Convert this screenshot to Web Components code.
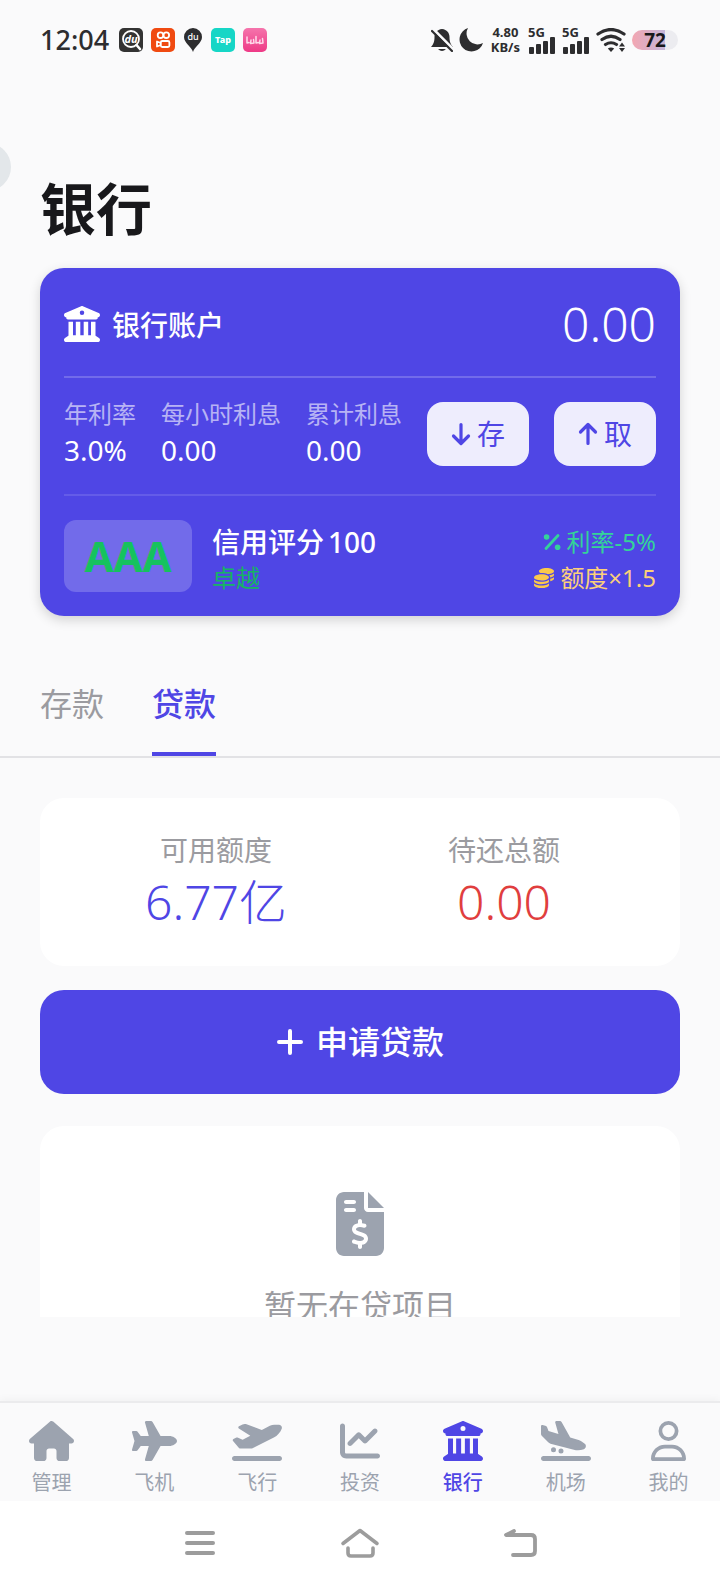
<!DOCTYPE html>
<html lang="zh-CN">
<head>
<meta charset="UTF-8">
<meta name="viewport" content="width=device-width, initial-scale=1.0">
<title>银行</title>
<style>
  html, body {
    margin: 0;
    height: 100%;
  }
  body {
    background: #fafafb;
    color: #18181b;
    font-family: "Noto Sans", "Noto Sans CJK SC", sans-serif;
    --brand: #4f46e5;
    --muted: #9ca3af;
    --gutter: 40px;
  }
</style>
</head>
<body>
<bank-app></bank-app>

<script>
const ICONS = {
  bank: ['0 0 512 512', '<path d="M243.4 2.6l-224 96c-14 6-21.8 21-18.7 35.8S16.8 160 32 160v8c0 13.3 10.7 24 24 24H456c13.3 0 24-10.7 24-24v-8c15.2 0 28.3-10.7 31.3-25.6s-4.8-29.9-18.7-35.8l-224-96c-8-3.4-17.2-3.4-25.2 0zM128 224H64V420.3c-.6 .3-1.2 .7-1.8 1.1l-48 32c-11.7 7.8-17 22.4-12.9 35.9S17.9 512 32 512H480c14.1 0 26.5-9.2 30.6-22.7s-1.1-28.1-12.9-35.9l-48-32c-.6-.4-1.2-.7-1.8-1.1V224H384V416H344V224H280V416H232V224H168V416H128V224zM256 64a32 32 0 1 1 0 64 32 32 0 1 1 0-64z"/>'],
  house: ['0 0 576 512', '<path d="M575.8 255.5c0 18-15 32.1-32 32.1h-32l.7 160.2c0 2.7-.2 5.4-.5 8.1V472c0 22.1-17.9 40-40 40H456c-1.1 0-2.2 0-3.3-.1c-1.4 .1-2.8 .1-4.2 .1H416 392c-22.1 0-40-17.9-40-40V448 384c0-17.7-14.3-32-32-32H256c-17.7 0-32 14.3-32 32v64 24c0 22.1-17.9 40-40 40H160 128.1c-1.5 0-3-.1-4.5-.2c-1.2 .1-2.4 .2-3.6 .2H104c-22.1 0-40-17.9-40-40V360c0-.9 0-1.9 .1-2.8V287.6H32c-18 0-32-14-32-32.1c0-9 3-17 10-24L266.4 8c7-7 15-8 22-8s15 2 21 7L564.8 231.5c8 7 12 15 11 24z"/>'],
  plane: ['0 0 576 512', '<path d="M482.3 192c34.2 0 93.7 29 93.7 64c0 36-59.5 64-93.7 64l-116.6 0L265.2 495.9c-5.7 10-16.3 16.1-27.8 16.1l-56.2 0c-10.6 0-18.3-10.2-15.4-20.4l49-171.6L112 320 68.8 377.6c-3 4-7.8 6.4-12.8 6.4l-42 0c-7.8 0-14-6.3-14-14c0-1.3 .2-2.6 .5-3.9L32 256 .5 145.9c-.4-1.3-.5-2.6-.5-3.9c0-7.8 6.3-14 14-14l42 0c5 0 9.8 2.4 12.8 6.4L112 192l102.9 0-49-171.6C162.9 10.2 170.6 0 181.2 0l56.2 0c11.5 0 22.1 6.2 27.8 16.1L365.7 192l116.6 0z"/>'],
  depart: ['0 0 640 512', '<path d="M381 114.9L186.1 41.8c-16.7-6.2-35.2-5.3-51.1 2.7L89.1 67.4C78 73 77.2 88.5 87.6 95.2l146.9 94.5L136 240 77.8 214.1c-8.7-3.9-18.8-3.7-27.3 .6L18.3 230.8c-9.3 4.7-11.8 16.8-5 24.7l73.1 85.3c6.1 7.1 15 11.2 24.3 11.2H248.4c5 0 9.9-1.2 14.3-3.4L535.6 212.2c46.5-23.3 82.5-63.3 100.8-112C645.9 75 627.2 48 600.2 48H542.8c-20.2 0-40.2 4.8-58.2 14L381 114.9zM0 480c0 17.7 14.3 32 32 32H608c17.7 0 32-14.3 32-32s-14.3-32-32-32H32c-17.7 0-32 14.3-32 32z"/>'],
  arrive: ['0 0 640 512', '<path d="M.3 166.9L0 68C0 57.7 9.5 50.1 19.5 52.3l35.6 7.9c10.6 2.3 19.2 9.9 23 20L96 128l127.3 37.6L181.8 20.4C178.9 10.2 186.6 0 197.2 0h40.1c11.6 0 22.2 6.2 27.9 16.3l109 193.8 107.2 31.7c15.9 4.7 30.8 12.5 43.7 22.8l34.4 27.6c24 19.2 18.1 57.3-10.7 68.2c-41.2 15.6-86.2 18.1-128.8 7L121.7 289.8c-11.1-2.9-21.2-8.7-29.3-16.9L9.5 189.4c-5.9-6-9.3-14.1-9.3-22.5zM32 448H608c17.7 0 32 14.3 32 32s-14.3 32-32 32H32c-17.7 0-32-14.3-32-32s14.3-32 32-32zm96-80a32 32 0 1 1 64 0 32 32 0 1 1 -64 0zm128-16a32 32 0 1 1 0 64 32 32 0 1 1 0-64z"/>'],
  chart: ['0 0 512 512', '<path d="M64 64c0-17.7-14.3-32-32-32S0 46.3 0 64V400c0 44.2 35.8 80 80 80H480c17.7 0 32-14.3 32-32s-14.3-32-32-32H80c-8.8 0-16-7.2-16-16V64zm406.6 86.6c12.5-12.5 12.5-32.8 0-45.3s-32.8-12.5-45.3 0L320 210.7l-57.4-57.4c-12.5-12.5-32.8-12.5-45.3 0l-112 112c-12.5 12.5-12.5 32.8 0 45.3s32.8 12.5 45.3 0L240 221.3l57.4 57.4c12.5 12.5 32.8 12.5 45.3 0l128-128z"/>'],
  user: ['0 0 448 512', '<path d="M304 128a80 80 0 1 0 -160 0 80 80 0 1 0 160 0zM96 128a128 128 0 1 1 256 0A128 128 0 1 1 96 128zM49.3 464H398.7c-8.9-63.3-63.3-112-129-112H178.3c-65.7 0-120.1 48.7-129 112zM0 482.3C0 383.8 79.8 304 178.3 304h91.4C368.2 304 448 383.8 448 482.3c0 16.4-13.3 29.7-29.7 29.7H29.7C13.3 512 0 498.7 0 482.3z"/>'],
  invoice: ['0 0 384 512', '<path d="M64 0C28.7 0 0 28.7 0 64V448c0 35.3 28.7 64 64 64H320c35.3 0 64-28.7 64-64V160H256c-17.7 0-32-14.3-32-32V0H64zM256 0V128H384L256 0zM64 80c0-8.8 7.2-16 16-16h64c8.8 0 16 7.2 16 16s-7.2 16-16 16H80c-8.8 0-16-7.2-16-16zm0 64c0-8.8 7.2-16 16-16h64c8.8 0 16 7.2 16 16s-7.2 16-16 16H80c-8.8 0-16-7.2-16-16zm128 72c8.8 0 16 7.2 16 16v17.3c8.5 1.2 16.7 3.1 24.1 5.1c8.5 2.3 13.6 11 11.3 19.6s-11 13.6-19.6 11.3c-11.1-3-22-5.2-32.1-5.3c-8.4-.1-17.4 1.8-23.6 5.5c-5.7 3.4-8.1 7.3-8.1 12.8c0 3.7 1.3 6.5 7.3 10.1c6.9 4.1 16.6 7.1 29.2 10.9l.5 .1c11.3 3.4 25.3 7.6 36.3 14.6c12.1 7.6 22.4 19.7 22.7 38.2c.3 19.3-9.6 33.3-22.9 41.6c-7.7 4.8-16.4 7.6-25.1 9.1V440c0 8.8-7.2 16-16 16s-16-7.2-16-16V422.2c-11.2-2.1-21.7-5.7-30.9-8.9c-2.1-.7-4.2-1.4-6.2-2.1c-8.4-2.8-12.9-11.9-10.1-20.2s11.9-12.9 20.2-10.1c2.5 .8 4.8 1.6 7.1 2.4c13.6 4.6 24.6 8.4 36.3 8.7c9.1 .3 17.9-1.7 23.7-5.3c5.1-3.2 7.9-7.3 7.8-14c-.1-4.6-1.8-7.8-7.7-11.6c-6.8-4.3-16.5-7.4-29-11.2l-1.6-.5c-11-3.3-24.3-7.3-34.8-13.7c-12-7.2-22.6-18.9-22.7-37.3c-.1-19.4 10.8-32.8 23.8-40.5c7.5-4.4 15.8-7.2 24.1-8.7V232c0-8.8 7.2-16 16-16z"/>'],
  coins: ['0 0 512 512', '<path d="M512 80c0 18-14.3 34.6-38.4 48c-29.1 16.1-72.5 27.5-122.3 30.9c-3.7-1.8-7.4-3.5-11.3-5C300.6 137.4 248.2 128 192 128c-8.3 0-16.4 .2-24.5 .6l-1.1-.6C142.3 114.6 128 98 128 80c0-44.2 86-80 192-80S512 35.8 512 80zM160.7 161.1c10.2-.7 20.7-1.1 31.3-1.1c62.2 0 117.4 12.3 152.5 31.4C369.3 204.9 384 221.7 384 240c0 4-.7 7.9-2.1 11.7c-4.6 13.2-17 25.3-35 35.5c-.4 .2-.9 .5-1.3 .7c-35 19.4-90.8 32-153.6 32c-59.6 0-112.9-11.3-148.2-29.1c-1.9-.9-3.7-1.9-5.5-2.9C14.3 274.6 0 258 0 240c0-34.8 53.4-64.5 128-75.4c10.5-1.5 21.4-2.7 32.7-3.5zM416 240c0-21.9-10.6-39.9-24.1-53.4c28.3-4.4 54.2-11.4 76.2-20.5c16.3-6.8 31.5-15.2 43.9-25.5V176c0 19.3-16.5 37.1-43.8 50.9c-14.6 7.4-32.4 13.7-52.4 18.5c.1-1.8 .2-3.5 .2-5.3zm-32 96c0 18-14.3 34.6-38.4 48c-1.8 1-3.6 1.9-5.5 2.9C304.9 404.7 251.6 416 192 416c-62.8 0-118.6-12.6-153.6-32C14.3 370.6 0 354 0 336V300.6c12.5 10.3 27.6 18.7 43.9 25.5C83.4 342.6 135.8 352 192 352s108.6-9.4 148.1-25.9c7.8-3.2 15.3-6.9 22.4-10.9c6.1-3.4 11.8-7.2 17.2-11.2c1.5-1.1 2.9-2.3 4.3-3.4V336zm32 0V278.1c19-4.2 36.5-9.5 52.1-16c16.3-6.8 31.5-15.2 43.9-25.5V272c0 10.5-5 21-14.9 30.9c-16.3 16.3-45 29.7-81.3 38.4c.1-1.7 .2-3.5 .2-5.3zM192 448c56.2 0 108.6-9.4 148.1-25.9c16.3-6.8 31.5-15.2 43.9-25.5V432c0 44.2-86 80-192 80S0 476.2 0 432V396.6c12.5 10.3 27.6 18.7 43.9 25.5C83.4 438.6 135.8 448 192 448z"/>'],
  percent: ['0 0 18 18', '<path d="M3 15.5L15 2.5" fill="none" stroke="currentColor" stroke-width="2.8" stroke-linecap="round"/><circle cx="3.6" cy="4" r="2.8"/><circle cx="14.6" cy="14.2" r="2.8"/>'],
  down: ['0 0 20 24', '<path d="M10 2.5V21M2.5 14L10 21.5L17.5 14" fill="none" stroke="currentColor" stroke-width="3.2" stroke-linecap="round" stroke-linejoin="round"/>'],
  up: ['0 0 20 24', '<path d="M10 21.5V3M2.5 10L10 2.5L17.5 10" fill="none" stroke="currentColor" stroke-width="3.2" stroke-linecap="round" stroke-linejoin="round"/>'],
  plus: ['0 0 28 28', '<path d="M14 3V25M3 14H25" fill="none" stroke="currentColor" stroke-width="4" stroke-linecap="round"/>'],
  menu: ['0 0 40 32', '<path d="M7 6H33M7 16H33M7 26H33" fill="none" stroke="currentColor" stroke-width="4" stroke-linecap="round"/>'],
  home: ['0 0 40 32', '<path d="M3 16.5L20 3.5L37 16.5M8 21V26Q8 29 11 29H30Q33 29 33 26V21" fill="none" stroke="currentColor" stroke-width="3.6" stroke-linecap="round" stroke-linejoin="round"/>'],
  back: ['0 0 40 32', '<path d="M14 4L6 8H31Q35 8 35 12V24Q35 28 31 28H13" fill="none" stroke="currentColor" stroke-width="3.8" stroke-linecap="round" stroke-linejoin="round"/>'],
  duSearch: ['0 0 24 24', '<rect width="24" height="24" rx="5" fill="#333"/><circle cx="12" cy="11" r="8" fill="none" stroke="#fff" stroke-width="1.8"/><path d="M17.5 17L21 21" stroke="#fff" stroke-width="2.6" stroke-linecap="round"/><text x="12" y="15" text-anchor="middle" font-size="11" font-weight="700" font-style="italic" fill="#fff">du</text>'],
  kuai: ['0 0 24 24', '<rect width="24" height="24" rx="5" fill="#f04a11"/><g fill="none" stroke="#fff" stroke-width="1.8"><circle cx="9.5" cy="7.2" r="2.8"/><circle cx="15.3" cy="7.2" r="2.8"/><rect x="9.8" y="13" width="8.6" height="6" rx="1.5"/><path d="M9.8 15L6 13.5V18.5L9.8 17" stroke-linejoin="round"/></g>'],
  duPin: ['0 0 20 24', '<path d="M10 24C8.5 18.5 1 15 1 9A9 9 0 0 1 19 9C19 15 11.5 18.5 10 24z" fill="#2d2d2f"/><text x="10" y="12" text-anchor="middle" font-size="9" font-weight="500" fill="#fff">du</text>'],
  tap: ['0 0 24 24', '<rect width="24" height="24" rx="5" fill="#16d6c6"/><text x="12" y="15" text-anchor="middle" font-size="9" font-weight="800" fill="#fff">Tap</text>'],
  lala: ['0 0 24 24', '<defs><linearGradient id="g" x2="0" y2="1"><stop stop-color="#f574ac"/><stop offset="1" stop-color="#ee3a86"/></linearGradient></defs><rect width="24" height="24" rx="5" fill="url(#g)"/><path d="M4 9V15L6 14.5M8 12L7.5 15.5L11 15L10.5 11.5M13 8.5V15L15.5 14.5M17 12L16.5 15.5L20 15L19.5 10.5" fill="none" stroke="#ffd9ea" stroke-width="1.5" stroke-linecap="round" stroke-linejoin="round"/>'],
  bell: ['0 0 22 24', '<path d="M11 1C6 1.5 3.5 5 3.5 9C3.5 14 2.5 16 0 19H22C19.5 16 18.5 14 18.5 9C18.5 5 16 1.5 11 1z"/><path d="M7 21H15Q11 25 7 21z"/><path d="M1 0L23 22" stroke="#fafafb" stroke-width="3"/><path d="M1 3L21 23" stroke="currentColor" stroke-width="2.2" stroke-linecap="round"/>'],
  moon: ['0 0 24 24', '<path d="M9 0A12 12 0 1 0 24 15A11 11 0 0 1 9 0z"/>'],
  signal: ['0 0 28 17', '<rect x="1" y="10" width="5" height="7" rx="1"/><rect x="8" y="7" width="5" height="10" rx="1"/><rect x="15" y="4" width="5" height="13" rx="1"/><rect x="22" y="0" width="5" height="17" rx="1"/>'],
  wifi: ['0 0 30 24', '<path d="M2 6Q15 -3 28 6M6 11.5Q15 5 24 11.5M9.5 16.5Q15 13 20.5 16.5" fill="none" stroke="currentColor" stroke-width="3.2" stroke-linecap="round"/><path d="M15 24L11.8 20.5Q15 18.5 18.2 20.5z"/><path d="M26 14.5L29 18.5H23zM26 24L23 20H29z"/>'],
};

class AppIcon extends HTMLElement {
  connectedCallback() {
    const [box, body] = ICONS[this.getAttribute('name')];
    this.attachShadow({ mode: 'open' });
    this.shadowRoot.innerHTML = `
      <style>
        :host { display: inline-flex; flex: none; height: 24px; }
        svg { display: block; height: 100%; fill: currentColor; }
      </style>
      <svg viewBox="${box}" aria-hidden="true">${body}</svg>
    `;
  }
}
customElements.define('app-icon', AppIcon);

class PhoneStatusBar extends HTMLElement {
  connectedCallback() {
    this.attachShadow({ mode: 'open' });
    this.shadowRoot.innerHTML = `
      <style>
        :host {
          display: flex;
          justify-content: space-between;
          align-items: center;
          height: 80px;
          padding: 0 var(--gutter);
          color: #2d2d2f;
        }
        .group { display: flex; align-items: center; gap: 8px; }
        .system { gap: 6px; padding-right: 2px; }
        time { font-size: 27px; line-height: 32px; font-weight: 500; margin-right: 2px; }
        .speed {
          font-size: 13px;
          line-height: 15px;
          font-weight: 700;
          text-align: center;
          margin: 0 2px;
        }
        .speed div { height: 15px; }
        .cell { display: flex; flex-direction: column; font-size: 13px; line-height: 10px; font-weight: 700; }
        .cell app-icon { height: 17px; }
        .battery {
          width: 46px;
          line-height: 20px;
          border-radius: 10px;
          background: linear-gradient(90deg, #f3a6b1, #c3b6da 72%, #ececf0 72%);
          font-size: 19px;
          font-weight: 700;
          text-align: center;
          color: #18181b;
        }
      </style>
      <div class="group">
        <time>12:04</time>
        <app-icon name="duSearch"></app-icon>
        <app-icon name="kuai"></app-icon>
        <app-icon name="duPin"></app-icon>
        <app-icon name="tap"></app-icon>
        <app-icon name="lala"></app-icon>
      </div>
      <div class="group system">
        <app-icon name="bell"></app-icon>
        <app-icon name="moon"></app-icon>
        <div class="speed"><div>4.80</div><div>KB/s</div></div>
        <div class="cell">5G<app-icon name="signal"></app-icon></div>
        <div class="cell">5G<app-icon name="signal"></app-icon></div>
        <app-icon name="wifi"></app-icon>
        <div class="battery">72</div>
      </div>
    `;
  }
}
customElements.define('phone-status-bar', PhoneStatusBar);

class StatItem extends HTMLElement {
  connectedCallback() {
    this.attachShadow({ mode: 'open' });
    this.shadowRoot.innerHTML = `
      <style>
        :host { display: block; white-space: nowrap; line-height: 36px; }
        .label { font-size: 24px; color: rgba(255, 255, 255, 0.6); }
        .value { font-size: 28px; color: #fff; }
      </style>
      <div class="label">${this.getAttribute('label')}</div>
      <div class="value"><slot></slot></div>
    `;
  }
}
customElements.define('stat-item', StatItem);

class AccountCard extends HTMLElement {
  connectedCallback() {
    this.attachShadow({ mode: 'open' });
    this.shadowRoot.innerHTML = `
      <style>
        :host {
          display: block;
          padding: 24px 24px 20px;
          border-radius: 24px;
          background: var(--brand);
          color: #fff;
          box-shadow: 0 4px 12px rgba(0, 0, 0, 0.16);
        }
        .row { display: flex; justify-content: space-between; align-items: center; }
        .head { padding-bottom: 20px; border-bottom: 2px solid rgba(255, 255, 255, 0.2); }
        .name { display: flex; align-items: center; gap: 12px; font-size: 28px; font-weight: 500; }
        .name app-icon { height: 36px; }
        .balance { font-size: 48px; line-height: 64px; font-weight: 300; }
        .stats { padding: 18px 0 26px; border-bottom: 2px solid rgba(255, 255, 255, 0.12); }
        button {
          display: flex;
          align-items: center;
          gap: 6px;
          height: 64px;
          margin-top: 4px;
          padding: 0 24px;
          border: 0;
          border-radius: 16px;
          background: rgba(255, 255, 255, 0.9);
          color: var(--brand);
          font: inherit;
          font-size: 28px;
          line-height: 36px;
        }
        .credit { align-items: flex-start; gap: 20px; padding-top: 24px; }
        .grade {
          width: 128px;
          border-radius: 12px;
          background: rgba(255, 255, 255, 0.2);
          color: #16c25e;
          font-size: 42px;
          line-height: 72px;
          font-weight: 700;
          text-align: center;
        }
        .score { flex: 1; padding-top: 4px; font-size: 28px; line-height: 36px; font-weight: 500; }
        .score span { margin-left: 4px; }
        .level { font-size: 24px; font-weight: 400; color: #16b364; }
        .perks { padding-top: 4px; font-size: 24px; line-height: 36px; color: #34d399; }
        .perks div { display: flex; justify-content: flex-end; align-items: center; gap: 6px; }
        .perks .limit { color: #fcd07a; }
        .perks app-icon { height: 18px; }
        .perks .limit app-icon { height: 20px; color: #fbc94a; }
      </style>
      <div class="row head">
        <div class="name"><app-icon name="bank"></app-icon>银行账户</div>
        <div class="balance">0.00</div>
      </div>
      <div class="row stats">
        <stat-item label="年利率">3.0%</stat-item>
        <stat-item label="每小时利息">0.00</stat-item>
        <stat-item label="累计利息">0.00</stat-item>
        <button type="button"><app-icon name="down"></app-icon>存</button>
        <button type="button"><app-icon name="up"></app-icon>取</button>
      </div>
      <div class="row credit">
        <div class="grade">AAA</div>
        <div class="score">信用评分<span>100</span><div class="level">卓越</div></div>
        <div class="perks">
          <div><app-icon name="percent"></app-icon>利率-5%</div>
          <div class="limit"><app-icon name="coins"></app-icon>额度×1.5</div>
        </div>
      </div>
    `;
  }
}
customElements.define('account-card', AccountCard);

class BankTabs extends HTMLElement {
  connectedCallback() {
    this.attachShadow({ mode: 'open' });
    this.shadowRoot.innerHTML = `
      <style>
        :host {
          display: flex;
          gap: 48px;
          padding: 0 var(--gutter);
          border-bottom: 2px solid #e2e2e5;
        }
        button {
          padding: 24px 0;
          border: 0;
          border-bottom: 4px solid transparent;
          background: none;
          color: #9b9ba0;
          font: inherit;
          font-size: 32px;
          line-height: 48px;
        }
        button[aria-selected="true"] {
          color: var(--brand);
          border-color: var(--brand);
          font-weight: 500;
        }
      </style>
      <button type="button" role="tab" aria-selected="false">存款</button>
      <button type="button" role="tab" aria-selected="true">贷款</button>
    `;
    this.setAttribute('role', 'tablist');
  }
}
customElements.define('bank-tabs', BankTabs);

class LoanSummary extends HTMLElement {
  connectedCallback() {
    this.attachShadow({ mode: 'open' });
    this.shadowRoot.innerHTML = `
      <style>
        :host {
          display: grid;
          grid-template-columns: 1fr 1fr;
          padding: 32px;
          border-radius: 24px;
          background: #fff;
          text-align: center;
        }
        .label { font-size: 28px; line-height: 40px; color: #9b9ba0; }
        .value { font-size: 48px; line-height: 64px; font-weight: 300; color: var(--brand); }
        .debt { color: #e03e3e; }
      </style>
      <div>
        <div class="label">可用额度</div>
        <div class="value">6.77亿</div>
      </div>
      <div>
        <div class="label">待还总额</div>
        <div class="value debt">0.00</div>
      </div>
    `;
  }
}
customElements.define('loan-summary', LoanSummary);

class ApplyButton extends HTMLElement {
  connectedCallback() {
    this.attachShadow({ mode: 'open' });
    this.shadowRoot.innerHTML = `
      <style>
        :host { display: block; }
        button {
          display: flex;
          justify-content: center;
          align-items: center;
          gap: 12px;
          width: 100%;
          height: 104px;
          border: 0;
          border-radius: 24px;
          background: var(--brand);
          color: #fff;
          font: inherit;
          font-size: 32px;
          line-height: 48px;
          font-weight: 500;
        }
        app-icon { height: 28px; }
      </style>
      <button type="button"><app-icon name="plus"></app-icon><slot></slot></button>
    `;
  }
}
customElements.define('apply-button', ApplyButton);

class EmptyState extends HTMLElement {
  connectedCallback() {
    this.attachShadow({ mode: 'open' });
    this.shadowRoot.innerHTML = `
      <style>
        :host {
          display: flex;
          flex-direction: column;
          align-items: center;
          gap: 26px;
          padding: 66px 24px;
          border-radius: 24px;
          background: #fff;
          color: #9b9ba0;
          font-size: 32px;
          line-height: 48px;
        }
        app-icon { height: 64px; color: var(--muted); }
      </style>
      <app-icon name="invoice"></app-icon>
      <div><slot></slot></div>
    `;
  }
}
customElements.define('empty-state', EmptyState);

class NavItem extends HTMLElement {
  connectedCallback() {
    this.attachShadow({ mode: 'open' });
    this.shadowRoot.innerHTML = `
      <style>
        :host { display: block; flex: 1; }
        a {
          display: flex;
          flex-direction: column;
          align-items: center;
          gap: 8px;
          color: var(--muted);
          font-size: 20px;
          line-height: 28px;
          text-decoration: none;
        }
        app-icon { height: 40px; }
        :host([active]) a { color: var(--brand); font-weight: 500; }
      </style>
      <a href="#"><app-icon name="${this.getAttribute('icon')}"></app-icon><slot></slot></a>
    `;
  }
}
customElements.define('nav-item', NavItem);

class BottomNav extends HTMLElement {
  connectedCallback() {
    this.attachShadow({ mode: 'open' });
    this.shadowRoot.innerHTML = `
      <style>
        :host { display: block; }
        nav {
          display: flex;
          padding: 18px 0 4px;
          border-top: 2px solid #ebebed;
          background: #fafafb;
          box-shadow: 0 -2px 8px rgba(0, 0, 0, 0.04);
        }
      </style>
      <nav><slot></slot></nav>
    `;
  }
}
customElements.define('bottom-nav', BottomNav);

class SystemKeys extends HTMLElement {
  connectedCallback() {
    this.attachShadow({ mode: 'open' });
    this.shadowRoot.innerHTML = `
      <style>
        :host {
          position: relative;
          display: flex;
          justify-content: center;
          align-items: center;
          gap: 120px;
          height: 84px;
          background: #fff;
          color: #9c9c9c;
        }
        button { padding: 0; border: 0; background: none; color: inherit; }
        app-icon { display: flex; height: 32px; }
      </style>
      <button type="button" aria-label="菜单"><app-icon name="menu"></app-icon></button>
      <button type="button" aria-label="主页"><app-icon name="home"></app-icon></button>
      <button type="button" aria-label="返回"><app-icon name="back"></app-icon></button>
    `;
  }
}
customElements.define('system-keys', SystemKeys);

class BankApp extends HTMLElement {
  connectedCallback() {
    this.attachShadow({ mode: 'open' });
    this.shadowRoot.innerHTML = `
      <style>
        :host {
          position: relative;
          display: flex;
          flex-direction: column;
          height: 100vh;
          overflow: hidden;
        }
        main { flex: 1; min-height: 0; overflow: hidden; margin-bottom: 84px; }
        h1 {
          margin: 92px var(--gutter) 24px;
          font-size: 56px;
          line-height: 72px;
          font-weight: 700;
        }
        account-card { margin: 0 var(--gutter) 40px; }
        .panel { padding: 40px var(--gutter); }
        apply-button { margin: 24px 0 32px; }
        /* edge handle that floats over the page */
        .handle {
          position: absolute;
          left: -37px;
          top: 143px;
          width: 48px;
          height: 48px;
          border-radius: 50%;
          background: #e3e7ea;
        }
      </style>
      <main>
        <phone-status-bar></phone-status-bar>
        <h1>银行</h1>
        <account-card></account-card>
        <bank-tabs></bank-tabs>
        <div class="panel">
          <loan-summary></loan-summary>
          <apply-button>申请贷款</apply-button>
          <empty-state>暂无在贷项目</empty-state>
        </div>
      </main>
      <bottom-nav>
        <nav-item icon="house">管理</nav-item>
        <nav-item icon="plane">飞机</nav-item>
        <nav-item icon="depart">飞行</nav-item>
        <nav-item icon="chart">投资</nav-item>
        <nav-item icon="bank" active>银行</nav-item>
        <nav-item icon="arrive">机场</nav-item>
        <nav-item icon="user">我的</nav-item>
      </bottom-nav>
      <system-keys></system-keys>
      <div class="handle"></div>
    `;
  }
}
customElements.define('bank-app', BankApp);
</script>
</body>
</html>
